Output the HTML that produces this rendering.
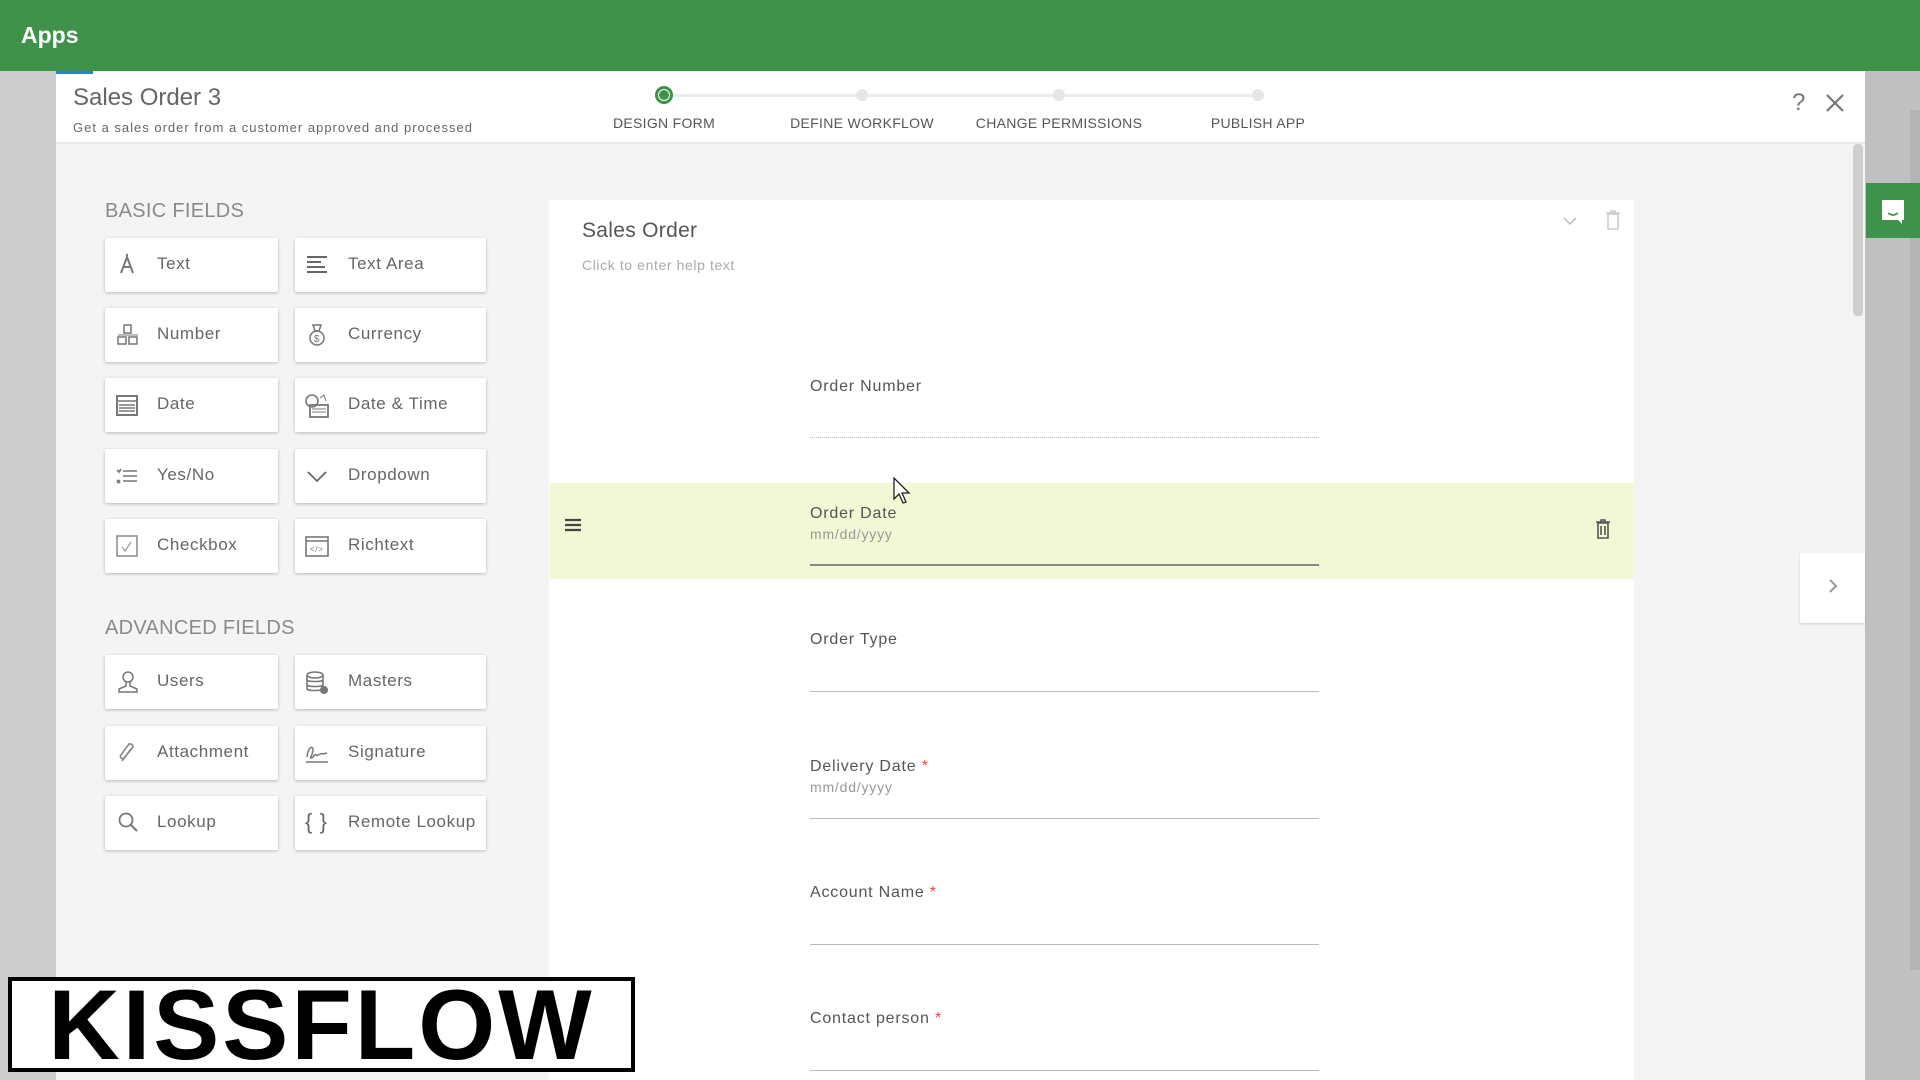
<!DOCTYPE html>
<html><head><meta charset="utf-8"><style>
*{box-sizing:border-box;margin:0;padding:0}
body{width:1920px;height:1080px;overflow:hidden;background:#c8c8c8;font-family:"Liberation Sans",sans-serif;position:relative}
.a{position:absolute}
.hdr{left:0;top:0;width:1920px;height:71px;background:#3e924a}
.apps{left:21px;top:22px;color:#fff;font-size:23px;font-weight:bold}
.modal{left:56px;top:71px;width:1809px;height:1009px;background:#f4f4f4}
.mh{left:56px;top:71px;width:1809px;height:73px;background:#fff;border-bottom:2px solid #e8e8e8}
.step{font-size:14px;color:#555;top:115px;width:200px;text-align:center;letter-spacing:0.3px}
.dot{width:12px;height:12px;border-radius:50%;background:#e6e6e6;top:89px}
.line{top:94px;height:3px;background:#ececec}
.sec{color:#8a8a8a;font-size:20px;letter-spacing:0.3px}
.btn{background:#fff;height:54px;box-shadow:0 1px 3px rgba(0,0,0,.25);border-radius:2px;color:#666;font-size:17px;letter-spacing:0.6px}
.btn span{position:absolute;top:16px}
.btn svg{position:absolute;top:15px}
.card{left:549px;top:200px;width:1085px;height:880px;background:#fff}
.lbl{font-size:16px;color:#555;left:810px;letter-spacing:0.8px}
.ph{font-size:14px;color:#999;left:810px;letter-spacing:0.8px}
.ul{left:810px;width:509px;height:1px;background:#bbb}
.req{color:#e44}
</style></head><body>
<div class="a hdr"></div>
<div class="a apps">Apps</div>
<div class="a" style="left:0;top:71px;width:56px;height:1009px;background:#cdcdcd"></div>
<div class="a modal"></div>
<div class="a mh"></div>
<div class="a" style="left:56px;top:71px;width:37px;height:3px;background:#2d7dd2"></div>
<div class="a" style="left:73px;top:84px;font-size:24px;color:#666">Sales Order 3</div>
<div class="a" style="left:73px;top:120px;font-size:13px;color:#666;letter-spacing:1px">Get a sales order from a customer approved and processed</div>
<div class="a line" style="left:670px;width:588px"></div>
<div class="a" style="left:655px;top:86px;width:18px;height:18px;border-radius:50%;border:3px solid #3e924a;background:#fff"></div>
<div class="a" style="left:659px;top:90px;width:10px;height:10px;border-radius:50%;background:#3e924a"></div>
<div class="a dot" style="left:856px"></div>
<div class="a dot" style="left:1053px"></div>
<div class="a dot" style="left:1252px"></div>
<div class="a step" style="left:564px">DESIGN FORM</div>
<div class="a step" style="left:762px">DEFINE WORKFLOW</div>
<div class="a step" style="left:959px">CHANGE PERMISSIONS</div>
<div class="a step" style="left:1158px">PUBLISH APP</div>
<div class="a" style="left:1792px;top:89px;font-size:24px;color:#777">?</div>
<svg class="a" style="left:1826px;top:94px" width="18" height="18"><path d="M1 1L17 17M17 1L1 17" stroke="#777" stroke-width="2.2"/></svg>

<div class="a sec" style="left:105px;top:200px">BASIC FIELDS</div>
<div class="a sec" style="left:105px;top:617px">ADVANCED FIELDS</div>

<div class="a btn" style="left:105px;top:238px;width:173px"><svg style="left:12px" width="20" height="22"><path d="M4 20L10 4L16 20M6.5 14H13.5" stroke="#777" stroke-width="2" fill="none"/><circle cx="10" cy="2" r="1.2" fill="#777"/></svg><span style="left:52px">Text</span></div>
<div class="a btn" style="left:105px;top:308px;width:173px"><svg style="left:12px" width="22" height="22"><rect x="7" y="2" width="7" height="8" fill="none" stroke="#777" stroke-width="1.5"/><rect x="1" y="14" width="8" height="7" fill="none" stroke="#777" stroke-width="1.5"/><rect x="12" y="14" width="8" height="7" fill="none" stroke="#777" stroke-width="1.5"/><path d="M1 12H21" stroke="#777"/></svg><span style="left:52px">Number</span></div>
<div class="a btn" style="left:105px;top:378px;width:173px"><svg style="left:10px" width="24" height="24"><rect x="2" y="3" width="20" height="19" fill="none" stroke="#777" stroke-width="2"/><path d="M2 8H22M4 12H20M4 15H20M4 18H20" stroke="#777" stroke-width="1.5"/></svg><span style="left:52px">Date</span></div>
<div class="a btn" style="left:105px;top:449px;width:173px"><svg style="left:10px" width="24" height="22"><path d="M8 7H22M8 12H22M8 17H22M2 6L4 8L6 5M2 16L5 19M5 16L2 19" stroke="#777" stroke-width="1.6" fill="none"/></svg><span style="left:52px">Yes/No</span></div>
<div class="a btn" style="left:105px;top:519px;width:173px"><svg style="left:10px" width="24" height="24"><rect x="2" y="2" width="20" height="20" fill="none" stroke="#888" stroke-width="1.5"/><path d="M7 13L10 17L16 8" stroke="#999" stroke-width="1.2" fill="none"/></svg><span style="left:52px">Checkbox</span></div>
<div class="a btn" style="left:105px;top:655px;width:173px"><svg style="left:12px" width="22" height="24"><circle cx="11" cy="7" r="5" fill="none" stroke="#777" stroke-width="1.5"/><path d="M9 12V16L2 19V22H20V19L13 16V12" fill="none" stroke="#777" stroke-width="1.5"/></svg><span style="left:52px">Users</span></div>
<div class="a btn" style="left:105px;top:726px;width:173px"><svg style="left:12px" width="22" height="24"><path d="M5 20L16 6A3 3 0 0 0 12 3L4 14A2 2 0 0 0 7 17L14 8" fill="none" stroke="#888" stroke-width="1.6"/></svg><span style="left:52px">Attachment</span></div>
<div class="a btn" style="left:105px;top:796px;width:173px"><svg style="left:12px" width="22" height="24"><circle cx="9" cy="9" r="6.5" fill="none" stroke="#777" stroke-width="1.8"/><path d="M14 14L20 20" stroke="#777" stroke-width="2"/></svg><span style="left:52px">Lookup</span></div>
<div class="a btn" style="left:295px;top:238px;width:191px"><svg style="left:10px" width="24" height="24"><path d="M2 4H22M2 9H16M2 14H20M2 19H22" stroke="#666" stroke-width="2"/></svg><span style="left:53px">Text Area</span></div>
<div class="a btn" style="left:295px;top:308px;width:191px"><svg style="left:10px" width="24" height="24"><path d="M8 2H16L14 8H10Z" fill="none" stroke="#777" stroke-width="1.5"/><circle cx="12" cy="15" r="7" fill="none" stroke="#777" stroke-width="1.5"/><text x="9" y="19" font-size="10" fill="#777" font-family="Liberation Sans">$</text></svg><span style="left:53px">Currency</span></div>
<div class="a btn" style="left:295px;top:378px;width:191px"><svg style="left:9px" width="26" height="26"><circle cx="8" cy="8" r="6" fill="none" stroke="#777" stroke-width="1.6"/><rect x="6" y="12" width="18" height="12" fill="none" stroke="#777" stroke-width="1.8"/><path d="M8 16H22M8 19H22" stroke="#777"/><path d="M16 5L20 2L22 8" stroke="#777" fill="none"/></svg><span style="left:53px">Date &amp; Time</span></div>
<div class="a btn" style="left:295px;top:449px;width:191px"><svg style="left:10px" width="24" height="24"><path d="M3 8L12 17L21 8" stroke="#666" stroke-width="1.8" fill="none"/></svg><span style="left:53px">Dropdown</span></div>
<div class="a btn" style="left:295px;top:519px;width:191px"><svg style="left:9px" width="26" height="24"><rect x="2" y="3" width="22" height="19" fill="none" stroke="#777" stroke-width="1.6"/><path d="M2 7H24" stroke="#777" stroke-width="1.6"/><text x="6" y="18" font-size="8" fill="#777" font-family="Liberation Sans">&lt;/&gt;</text></svg><span style="left:53px">Richtext</span></div>
<div class="a btn" style="left:295px;top:655px;width:191px"><svg style="left:10px" width="24" height="26"><ellipse cx="10" cy="5" rx="8" ry="3" fill="none" stroke="#777" stroke-width="1.6"/><path d="M2 5V19C2 21 18 21 18 19V5M2 10C2 12 18 12 18 10M2 15C2 17 18 17 18 15" fill="none" stroke="#777" stroke-width="1.6"/><circle cx="19" cy="20" r="4" fill="#777"/></svg><span style="left:53px">Masters</span></div>
<div class="a btn" style="left:295px;top:726px;width:191px"><svg style="left:9px" width="26" height="24"><path d="M3 16C4 6 9 4 9 9C9 14 5 17 7 17C10 17 10 12 12 14C14 16 16 11 19 13L23 12" fill="none" stroke="#777" stroke-width="1.5"/><path d="M2 21H24" stroke="#777" stroke-width="1.6"/></svg><span style="left:53px">Signature</span></div>
<div class="a btn" style="left:295px;top:796px;width:191px"><span style="left:10px;top:13px;font-size:22px;color:#666">{ }</span><span style="left:53px">Remote Lookup</span></div>

<div class="a card"></div>
<div class="a" style="left:582px;top:219px;font-size:21px;color:#555;letter-spacing:0.3px">Sales Order</div>
<div class="a" style="left:582px;top:257px;font-size:14px;color:#aaa;letter-spacing:0.6px">Click to enter help text</div>
<svg class="a" style="left:1563px;top:216px" width="14" height="10"><path d="M1 2L7 8L13 2" stroke="#bbb" stroke-width="1.5" fill="none"/></svg>
<svg class="a" style="left:1605px;top:210px" width="16" height="20"><path d="M1 3H15M6 3V1H10V3M3 4H13V19H3Z" stroke="#ccc" stroke-width="1.6" fill="none"/></svg>

<div class="a lbl" style="top:378px">Order Number</div>
<div class="a" style="left:810px;top:437px;width:509px;border-top:1px dotted #bbb"></div>

<div class="a" style="left:550px;top:483px;width:1084px;height:96px;background:#f2f7d5"></div>
<svg class="a" style="left:564px;top:517px" width="18" height="16"><path d="M1 3H17M1 8H17M1 13H17" stroke="#444" stroke-width="2.2"/></svg>
<div class="a lbl" style="top:505px">Order Date</div>
<div class="a ph" style="top:526px">mm/dd/yyyy</div>
<div class="a ul" style="top:564px;height:2px;background:#888"></div>
<svg class="a" style="left:1595px;top:519px" width="16" height="20"><path d="M1 3H15M6 3V1H10V3M3 4H13V19H3ZM6 7V16M10 7V16" stroke="#555" stroke-width="1.6" fill="none"/></svg>

<div class="a lbl" style="top:631px">Order Type</div>
<div class="a ul" style="top:691px"></div>
<div class="a lbl" style="top:758px">Delivery Date <span class="req">*</span></div>
<div class="a ph" style="top:779px">mm/dd/yyyy</div>
<div class="a ul" style="top:818px"></div>
<div class="a lbl" style="top:884px">Account Name <span class="req">*</span></div>
<div class="a ul" style="top:944px"></div>
<div class="a lbl" style="top:1010px">Contact person <span class="req">*</span></div>
<div class="a ul" style="top:1070px"></div>

<svg class="a" style="left:893px;top:477px" width="20" height="28"><path d="M1 1V22L6 17L10 26L13 25L9 16H16Z" fill="#fff" stroke="#222" stroke-width="1.3"/></svg>

<div class="a" style="left:1853px;top:144px;width:10px;height:172px;background:#cfcfcf;border-radius:4px"></div>
<div class="a" style="left:1865px;top:71px;width:55px;height:1009px;background:#c0c0c0"></div>
<div class="a" style="left:1910px;top:110px;width:10px;height:860px;background:#b4b4b4"></div>
<div class="a" style="left:1866px;top:183px;width:54px;height:55px;background:#3e924a"></div>
<svg class="a" style="left:1880px;top:198px" width="26" height="28"><path d="M2 2H24V22H22V26L18 22H2Z" fill="#fff"/><path d="M8 15Q13 19 18 15" stroke="#3e924a" stroke-width="1.6" fill="none"/></svg>
<div class="a" style="left:1800px;top:553px;width:65px;height:70px;background:#fff;box-shadow:0 1px 2px rgba(0,0,0,.15)"></div>
<svg class="a" style="left:1828px;top:578px" width="10" height="16"><path d="M2 2L8 8L2 14" stroke="#999" stroke-width="2" fill="none"/></svg>

<div class="a" style="left:8px;top:977px;width:627px;height:95px;background:#fff;border:4px solid #000"></div>
<div class="a" style="left:8px;top:972px;width:627px;text-align:center;font-size:99px;font-weight:bold;color:#000;letter-spacing:3px;line-height:105px">KISSFLOW</div>
</body></html>
